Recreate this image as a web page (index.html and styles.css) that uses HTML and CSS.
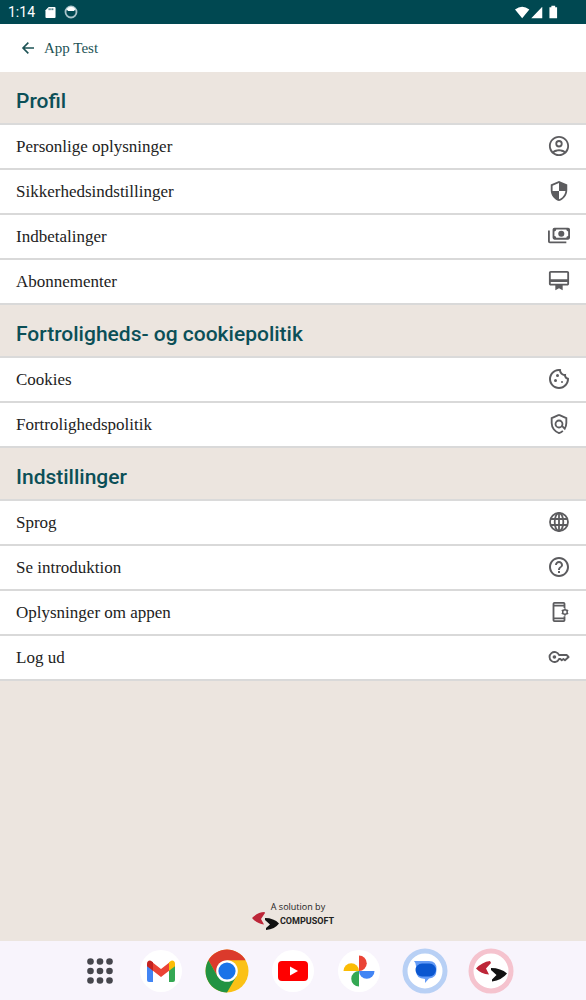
FILE: index.html
```html
<!DOCTYPE html>
<html lang="da">
<head>
<meta charset="utf-8">
<meta name="viewport" content="width=device-width, initial-scale=1">
<title>App Test</title>
<link rel="stylesheet" href="styles.css">
</head>
<body>
<div class="status">
  <span class="clock">1:14</span>
  <svg class="sd" viewBox="0 0 12 13" aria-hidden="true"><path fill="#fff" d="M4 1h6.500q1 0 1 1v10q0 1-1 1h-9q-1 0-1-1V4.500z"/><path stroke="#004851" d="M4.500 2.500v2M6.500 2.500v2M8.500 2.500v2"/></svg>
  <svg class="ring" viewBox="0 0 14 14" aria-hidden="true"><circle cx="7" cy="7" r="5.500" fill="none" stroke="#a9c4ca" stroke-width="1.800"/><path fill="#fff" d="M2.500 4Q7-.500 11.500 4L10 6H4z"/></svg>
  <svg class="signals" viewBox="0 0 46 14" aria-hidden="true"><path fill="#fff" d="M0 4.500Q7.500-1.500 15 4.500L7.500 13.500zM17 13.500 28.500 1.500v12zM36 2h2V.500h4V2h2v11.500h-8z"/></svg>
</div>
<header class="topbar">
  <a class="back" href="#">
    <svg viewBox="0 0 24 24" aria-hidden="true"><path fill="none" stroke="currentColor" stroke-width="2.400" d="M21 12H5M12.500 4 4.500 12l8 8"/></svg>
    <span>App Test</span>
  </a>
</header>
<main class="content">
  <section>
    <h2 class="heading">Profil</h2>
    <a class="row" href="#"><span>Personlige oplysninger</span>
      <svg viewBox="0 0 24 24"><path d="M12 1C5.900 1 1 5.900 1 12s4.900 11 11 11 11-4.900 11-11S18.100 1 12 1zM6.800 19.200C8.300 18.200 10.100 17.600 12 17.600s3.700.600 5.200 1.600C15.700 20.300 13.900 21 12 21s-3.700-.700-5.200-1.800zm11.900-1.500C16.800 16.400 14.500 15.600 12 15.600s-4.800.800-6.700 2.100C3.900 16.200 3 14.200 3 12c0-5 4-9 9-9s9 4 9 9c0 2.200-.900 4.200-2.300 5.700z"/><circle cx="12" cy="9.500" r="3" fill="none" stroke="#5c5c5f" stroke-width="2"/></svg></a>
    <a class="row" href="#"><span>Sikkerhedsindstillinger</span>
      <svg viewBox="0 0 24 24"><path d="M12 1 3 5v6c0 5.550 3.840 10.740 9 12 5.160-1.260 9-6.450 9-12V5l-9-4zm0 10.990h7c-.530 4.120-3.280 7.790-7 8.940V12H5V6.300l7-3.110v8.800z"/></svg></a>
    <a class="row" href="#"><span>Indbetalinger</span>
      <svg viewBox="0 0 24 24"><path fill-rule="evenodd" d="M7 3h15q2 0 2 2v9q0 2-2 2H7q-2 0-2-2V5q0-2 2-2zm2 2q0 2-2 2v5q2 0 2 2h11q0-2 2-2V7q-2 0-2-2z"/><circle cx="14.500" cy="9.500" r="3.300"/><path d="M0 6h2v12h18v2H2q-2 0-2-2z"/></svg></a>
    <a class="row" href="#"><span>Abonnementer</span>
      <svg viewBox="0 0 24 24"><path d="M21 1H3C1.900 1 1 1.900 1 3v12c0 1.100.900 2 2 2h5v5l4-2 4 2v-5h5c1.100 0 2-.900 2-2V3c0-1.100-.900-2-2-2zm0 14H3v-2h18v2zm0-5H3V3h18v7z"/></svg></a>
  </section>
  <section>
    <h2 class="heading">Fortroligheds- og cookiepolitik</h2>
    <a class="row" href="#"><span>Cookies</span>
      <svg viewBox="1 1 22 22"><circle cx="10.500" cy="8.500" r="1.500"/><circle cx="8.500" cy="13.500" r="1.500"/><circle cx="15" cy="15" r="1"/><path d="M21.950 10.990c-1.790-.030-3.700-1.950-2.680-4.220-2.980 1-5.770-1.590-5.190-4.560C6.950.710 2 6.580 2 12c0 5.520 4.480 10 10 10 5.890 0 10.540-5.080 9.950-11.010zM12 20c-4.410 0-8-3.590-8-8 0-3.310 2.730-8.180 8.080-8.020.420 2.540 2.440 4.560 4.990 4.940.070.360.520 2.550 2.920 3.630C19.700 16.860 16.060 20 12 20z"/></svg></a>
    <a class="row" href="#"><span>Fortrolighedspolitik</span>
      <svg viewBox="0 0 24 24"><path d="M12 2 4 5.500V11c0 5 3.400 9.500 8 10.900 1.600-.500 3-1.300 4.200-2.400M12 2l8 3.500V11c0 2.200-.700 4.300-1.700 6.100l-3.400-3.400" fill="none" stroke="#5c5c5f" stroke-width="2"/><circle cx="12" cy="12" r="3.800" fill="none" stroke="#5c5c5f" stroke-width="2"/></svg></a>
  </section>
  <section>
    <h2 class="heading">Indstillinger</h2>
    <a class="row" href="#"><span>Sprog</span>
      <svg viewBox="1 1 22 22"><g fill="none" stroke="#5c5c5f" stroke-width="1.800"><circle cx="12" cy="12" r="9"/><ellipse cx="12" cy="12" rx="4.300" ry="9"/><path d="M3.500 9h17M3.500 15h17M12 3v18"/></g></svg></a>
    <a class="row" href="#"><span>Se introduktion</span>
      <svg viewBox="1 1 22 22"><path d="M11 18h2v-2h-2v2zm1-16C6.480 2 2 6.480 2 12s4.480 10 10 10 10-4.480 10-10S17.520 2 12 2zm0 18c-4.410 0-8-3.590-8-8s3.590-8 8-8 8 3.590 8 8-3.590 8-8 8zm0-14c-2.210 0-4 1.790-4 4h2c0-1.100.900-2 2-2s2 .900 2 2c0 2-3 1.750-3 5h2c0-2.250 3-2.500 3-5 0-2.210-1.790-4-4-4z"/></svg></a>
    <a class="row" href="#"><span>Oplysninger om appen</span>
      <svg viewBox="0 0 24 24"><path d="M19 7.500V3q0-2-2-2H7Q5 1 5 3v18q0 2 2 2h10q2 0 2-2v-4.500h-2V18H7V6h10v1.500zM7 20h10v1H7zM7 3h10v1H7z" fill-rule="evenodd"/><circle cx="18.500" cy="12" r="2.500" fill="none" stroke="#5c5c5f" stroke-width="1.600"/><path d="M18.500 8v1.500M18.500 14.500V16M15 10l1.300.700M20.700 13.300 22 14M15 14l1.300-.700M20.700 10.700 22 10" fill="none" stroke="#5c5c5f" stroke-width="1.600"/></svg></a>
    <a class="row" href="#"><span>Log ud</span>
      <svg viewBox="0 0 24 24"><path d="M12 9.800A5.400 5.400 0 1 0 12 14.200H13.500l1.500 1.300 1.800-1.300 1.700 1.300L22.500 12l-2.200-2.200z" fill="none" stroke="#5c5c5f" stroke-width="2" stroke-linejoin="round"/><circle cx="7" cy="12" r="2"/></svg></a>
  </section>
  <footer class="credit">
    <span class="by">A solution by</span>
    <span class="brand">
      <svg viewBox="0 0 27 18" aria-hidden="true"><path fill="#bd2638" d="M12.500 0Q6 0 0 6 5 12 12 12.500L9 7 13 1z"/><path fill="#111" d="M13 6q9 0 14 5.500-4 5.500-13 6.500v-2l4-3.500-5-4.500z"/></svg>
      <span>COMPUSOFT</span>
    </span>
  </footer>
</main>
<nav class="dock">
  <button class="apps" aria-label="Apps"><svg viewBox="0 0 34 34"><g fill="#46464d"><circle cx="7.500" cy="7.500" r="3.300"/><circle cx="17" cy="7.500" r="3.300"/><circle cx="26.500" cy="7.500" r="3.300"/><circle cx="7.500" cy="17" r="3.300"/><circle cx="17" cy="17" r="3.300"/><circle cx="26.500" cy="17" r="3.300"/><circle cx="7.500" cy="26.500" r="3.300"/><circle cx="17" cy="26.500" r="3.300"/><circle cx="26.500" cy="26.500" r="3.300"/></g></svg></button>
  <button aria-label="Gmail"><svg viewBox="0 0 44 44"><circle cx="22" cy="22" r="21" fill="#fff"/><path fill="#4285f4" d="M8 15l6 4v14h-4q-2 0-2-2z"/><path fill="#34a853" d="M30 19l6-4v16q0 2-2 2h-4z"/><path fill="#ea4335" d="M13 13l9 7 9-7v8l-9 7-9-7z"/><path fill="#c5221f" d="M8 15q0-3.500 3-3.500 1 0 3 1.800v8.400l-6-4.500z"/><path fill="#fbbc04" d="M36 15q0-3.500-3-3.500-1 0-3 1.800v8.400l6-4.500z"/></svg></button>
  <button aria-label="Chrome"><svg viewBox="0 0 44 44"><circle cx="22" cy="22" r="21.500" fill="#fbc116"/><path fill="#db3a2c" d="M3.400 11.300A21.500 21.500 0 0 1 40.600 11.300H22L12.700 27.400z"/><path fill="#229342" d="M3.400 11.300A21.500 21.500 0 0 0 22 43.500L31.300 27.400 12.700 27.400z"/><circle cx="22" cy="22" r="10.800" fill="#fff"/><circle cx="22" cy="22" r="8.600" fill="#1a73e8"/></svg></button>
  <button aria-label="YouTube"><svg viewBox="0 0 44 44"><circle cx="22" cy="22" r="21" fill="#fff"/><rect x="7" y="12" width="30" height="20" rx="4" fill="#f00"/><path fill="#fff" d="M19 17.500l8 4.500-8 4.500z"/></svg></button>
  <button aria-label="Photos"><svg viewBox="0 0 44 44"><circle cx="22" cy="22" r="21" fill="#fff"/><path fill="#ea4335" d="M22 6.500a7.750 7.750 0 0 1 0 15.500z"/><path fill="#4285f4" d="M22 22h15.500a7.750 7.750 0 0 1-15.500 0z"/><path fill="#34a853" d="M22 22v15.500a7.750 7.750 0 0 1 0-15.500z"/><path fill="#fbbc04" d="M22 22H6.500a7.750 7.750 0 0 1 15.500 0z"/></svg></button>
  <button aria-label="Messages"><svg viewBox="0 0 44 44"><circle cx="22" cy="22" r="20" fill="#fff" stroke="#b8d0f5" stroke-width="5"/><path fill="#659cf6" d="M11 12h15q7.500 0 7.500 8v1q0 8-7.500 8.500L22 34v-4q-9-.500-9-8v-5q0-3-2-5z"/><rect x="12.500" y="14.500" width="20.500" height="13" rx="6.500" fill="#0b57d0"/></svg></button>
  <button aria-label="Compusoft"><svg viewBox="0 0 44 44"><circle cx="22" cy="22" r="20" fill="#fff" stroke="#f5c3ce" stroke-width="5"/><path fill="#bd2638" d="M21 12Q13 13 7 19.500 12 25 20 25.500L17 19.500 22 14z"/><path fill="#111" d="M22 19q10 0 16 5.500Q33 31 23 32.500v-2l4.500-4.500L22 21z"/></svg></button>
</nav>
</body>
</html>
```
FILE: styles.css
```css
* { box-sizing: border-box; }
body {
  margin: 0;
  min-height: 100vh;
  display: flex;
  flex-direction: column;
  background: #ece5df;
  color: #222;
  font-family: "Liberation Serif", "Times New Roman", serif;
}
svg { display: block; overflow: visible; }
a { color: inherit; text-decoration: none; }
.status {
  display: flex;
  align-items: center;
  gap: 8px;
  height: 24px;
  padding: 0 27px 0 8px;
  background: #004851;
  color: #fff;
  font: 14px/24px Roboto, sans-serif;
}
.sd { width: 11px; height: 12px; margin-left: 2px; }
.ring { width: 14px; height: 14px; }
.signals { width: 44px; height: 14px; margin-left: auto; }
.topbar {
  height: 48px;
  padding: 0 20px;
  display: flex;
  align-items: center;
  background: #fff;
  color: #1d5355;
}
.back { display: flex; align-items: center; gap: 8px; font-size: 15px; line-height: 20px; }
.back svg { width: 16px; height: 16px; fill: currentColor; }
.content { flex: 1; display: flex; flex-direction: column; }
.heading {
  margin: 0;
  padding: 17px 16px 10px;
  border-bottom: 2px solid #dadada;
  color: #0b4f57;
  font: 500 21px/24px Roboto, sans-serif;
}
.row {
  display: flex;
  align-items: flex-start;
  justify-content: space-between;
  padding: 10px 16px 9px;
  border-bottom: 2px solid #d9d9d9;
  background: #fff;
  font-size: 17px;
  line-height: 24px;
}
.row svg { width: 22px; height: 22px; fill: #5c5c5f; }
.credit {
  margin-top: auto;
  padding-bottom: 11px;
  display: flex;
  flex-direction: column;
  align-items: center;
  color: #222;
}
.by { padding-left: 10px; font: 9px/10px "Open Sans", sans-serif; }
.brand { display: flex; align-items: center; gap: 1px; font: bold 9px/18px "Liberation Sans Narrow", Roboto, sans-serif; }
.brand svg { width: 27px; height: 18px; }
.dock {
  display: flex;
  justify-content: center;
  align-items: center;
  gap: 22px;
  height: 59px;
  padding-left: 10px;
  background: #f8f4fc;
}
.dock button { width: 44px; padding: 0; border: 0; background: none; }
.dock .apps { width: 34px; }
```
